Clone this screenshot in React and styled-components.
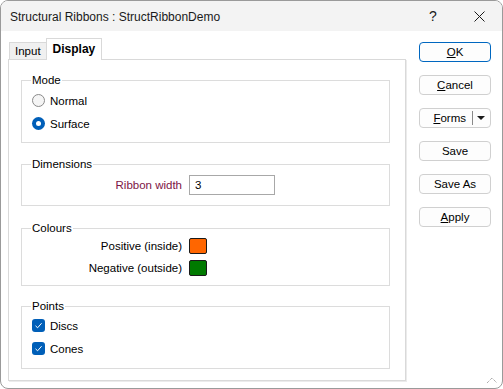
import React from "react";
import styled, { createGlobalStyle } from "styled-components";

const Global = createGlobalStyle`
  html, body { margin: 0; padding: 0; background: #ffffff; }
  body { font-family: "Liberation Sans", Arial, sans-serif; font-size: 11.5px; color: #000; }
  * { box-sizing: border-box; }
`;

const Window = styled.div`
  position: relative;
  width: 503px;
  height: 389px;
  border: 1px solid #9a9a9a;
  border-radius: 8px;
  overflow: hidden;
  background: #ffffff;
  display: flex;
  flex-direction: column;
`;

const TitleBar = styled.div`
  height: 30px;
  background: #f3f3f3;
  display: flex;
  align-items: center;
  padding-left: 9px;
  flex: none;
`;

const Title = styled.div`
  flex: 1;
  font-size: 12px;
  color: #1a1a1a;
  padding-top: 1px;
`;

const TitleButton = styled.div`
  width: 46px;
  height: 30px;
  display: flex;
  align-items: center;
  justify-content: center;
  font-size: 14px;
  color: #1a1a1a;
`;

const Body = styled.div`
  flex: 1;
  min-height: 0;
  display: flex;
  padding: 7px 0 7px 7px;
`;

const LeftCol = styled.div`
  width: 398px;
  display: flex;
  flex-direction: column;
`;

const TabStrip = styled.div`
  height: 21px;
  flex: none;
  display: flex;
  align-items: flex-end;
  padding-left: 1px;
`;

const Tab = styled.div`
  height: ${(p) => (p.$active ? "22px" : "17px")};
  margin-bottom: ${(p) => (p.$active ? "-1px" : "0")};
  padding: ${(p) => (p.$active ? "0 6px 2px 6px" : "0 5px")};
  background: ${(p) => (p.$active ? "#ffffff" : "#f0f0f0")};
  border: 1px solid #d9d9d9;
  border-bottom: none;
  border-right: ${(p) => (p.$active ? "1px solid #d9d9d9" : "none")};
  font-weight: ${(p) => (p.$active ? "bold" : "normal")};
  font-size: ${(p) => (p.$active ? "12px" : "11.5px")};
  display: flex;
  align-items: center;
  position: relative;
  z-index: ${(p) => (p.$active ? 2 : 1)};
`;

const Panel = styled.div`
  flex: 1;
  border: 1px solid #d9d9d9;
  box-shadow: 1px 1px 0 #ebebeb;
  background: #ffffff;
  padding: 20px 15px 0 12px;
  display: flex;
  flex-direction: column;
`;

const Group = styled.div`
  border: 1px solid #dcdcdc;
  margin-top: ${(p) => p.$top || 0}px;
  padding: 0 10px ${(p) => p.$bottom || 7}px 10px;
`;

const GroupTitle = styled.div`
  display: table;
  background: #ffffff;
  margin: -7px 0 ${(p) => p.$gap || 0}px -1px;
  padding: 0 1px;
  line-height: 13px;
  height: 13px;
`;

const OptionRow = styled.div`
  height: 23px;
  display: flex;
  align-items: center;
  gap: 5px;
`;

const Radio = styled.span`
  width: 13px;
  height: 13px;
  border-radius: 50%;
  flex: none;
  border: ${(p) => (p.$checked ? "none" : "1px solid #8a8a8a")};
  background: ${(p) => (p.$checked ? "#005fb8" : "#f5f5f5")};
  display: flex;
  align-items: center;
  justify-content: center;
  &::after {
    content: "";
    display: ${(p) => (p.$checked ? "block" : "none")};
    width: 5px;
    height: 5px;
    border-radius: 50%;
    background: #ffffff;
  }
`;

const Check = styled.span`
  width: 13px;
  height: 13px;
  border-radius: 3px;
  background: #005fb8;
  flex: none;
  display: flex;
  align-items: center;
  justify-content: center;
`;

const FormGrid = styled.div`
  display: grid;
  grid-template-columns: 150px auto;
  column-gap: 7px;
  align-items: center;
  grid-auto-rows: ${(p) => p.$row || 22}px;
`;

const FieldLabel = styled.div`
  text-align: right;
  color: ${(p) => p.$color || "#000"};
`;

const TextBox = styled.div`
  width: 86px;
  height: 20px;
  border: 1px solid #a8a8a8;
  padding-left: 5px;
  display: flex;
  align-items: center;
`;

const Swatch = styled.div`
  width: 18px;
  height: 16px;
  border: 1px solid #1a1a1a;
  border-radius: 2px;
  background: ${(p) => p.$color};
`;

const RightCol = styled.div`
  margin-left: 13px;
  padding-top: 4px;
  width: 72px;
  display: flex;
  flex-direction: column;
  gap: 13px;
`;

const Button = styled.div`
  height: 20px;
  border: 1px solid ${(p) => (p.$default ? "#0067c0" : "#d0d0d0")};
  border-radius: 4px;
  background: #fdfdfd;
  display: flex;
  align-items: center;
  justify-content: center;
  color: #000;
  u { text-decoration: underline; text-underline-offset: 1px; }
`;

const SplitButton = styled(Button)`
  justify-content: flex-start;
  padding-right: 5px;
`;

const SplitLabel = styled.span`
  flex: 1;
  text-align: right;
  padding-right: 6px;
`;

const SplitSep = styled.span`
  width: 1px;
  height: 14px;
  background: #8a8a8a;
`;

const SplitArrow = styled.span`
  margin-left: 4px;
  width: 0;
  height: 0;
  border-left: 4px solid transparent;
  border-right: 4px solid transparent;
  border-top: 4px solid #1a1a1a;
`;

const Grip = styled.svg`
  position: absolute;
  right: 4px;
  bottom: 4px;
`;

const CheckMark = () => (
  <svg width="9" height="9" viewBox="0 0 9 9">
    <path d="M1.5 4.8 L3.6 6.8 L7.6 2.2" stroke="#ffffff" strokeWidth="1" fill="none" />
  </svg>
);

export default function App() {
  return (
    <>
      <Global />
      <Window>
        <TitleBar>
          <Title>Structural Ribbons : StructRibbonDemo</Title>
          <TitleButton>?</TitleButton>
          <TitleButton>
            <svg width="11" height="11" viewBox="0 0 11 11">
              <path d="M0.5 0.5 L10.5 10.5 M10.5 0.5 L0.5 10.5" stroke="#1a1a1a" strokeWidth="1" fill="none" />
            </svg>
          </TitleButton>
        </TitleBar>
        <Body>
          <LeftCol>
            <TabStrip>
              <Tab>Input</Tab>
              <Tab $active>Display</Tab>
            </TabStrip>
            <Panel>
              <Group $bottom={7}>
                <GroupTitle $gap={2}>Mode</GroupTitle>
                <OptionRow>
                  <Radio />
                  Normal
                </OptionRow>
                <OptionRow>
                  <Radio $checked />
                  Surface
                </OptionRow>
              </Group>
              <Group $top={21} $bottom={9}>
                <GroupTitle $gap={2}>Dimensions</GroupTitle>
                <FormGrid $row={23}>
                  <FieldLabel $color="#7d1445">Ribbon width</FieldLabel>
                  <TextBox>3</TextBox>
                </FormGrid>
              </Group>
              <Group $top={22} $bottom={6}>
                <GroupTitle $gap={0}>Colours</GroupTitle>
                <FormGrid $row={22}>
                  <FieldLabel>Positive (inside)</FieldLabel>
                  <Swatch $color="#ff6600" />
                  <FieldLabel>Negative (outside)</FieldLabel>
                  <Swatch $color="#007a00" />
                </FormGrid>
              </Group>
              <Group $top={20} $bottom={8}>
                <GroupTitle $gap={1}>Points</GroupTitle>
                <OptionRow>
                  <Check><CheckMark /></Check>
                  Discs
                </OptionRow>
                <OptionRow>
                  <Check><CheckMark /></Check>
                  Cones
                </OptionRow>
              </Group>
            </Panel>
          </LeftCol>
          <RightCol>
            <Button $default><span><u>O</u>K</span></Button>
            <Button><span><u>C</u>ancel</span></Button>
            <SplitButton>
              <SplitLabel><u>F</u>orms</SplitLabel>
              <SplitSep />
              <SplitArrow />
            </SplitButton>
            <Button>Save</Button>
            <Button>Save As</Button>
            <Button><span><u>A</u>pply</span></Button>
          </RightCol>
        </Body>
        <Grip width="12" height="8" viewBox="0 0 12 8">
          <path d="M1 7 L6 2 L11 7" stroke="#8a8a8a" strokeWidth="1" fill="none" strokeDasharray="1 1" />
        </Grip>
      </Window>
    </>
  );
}
